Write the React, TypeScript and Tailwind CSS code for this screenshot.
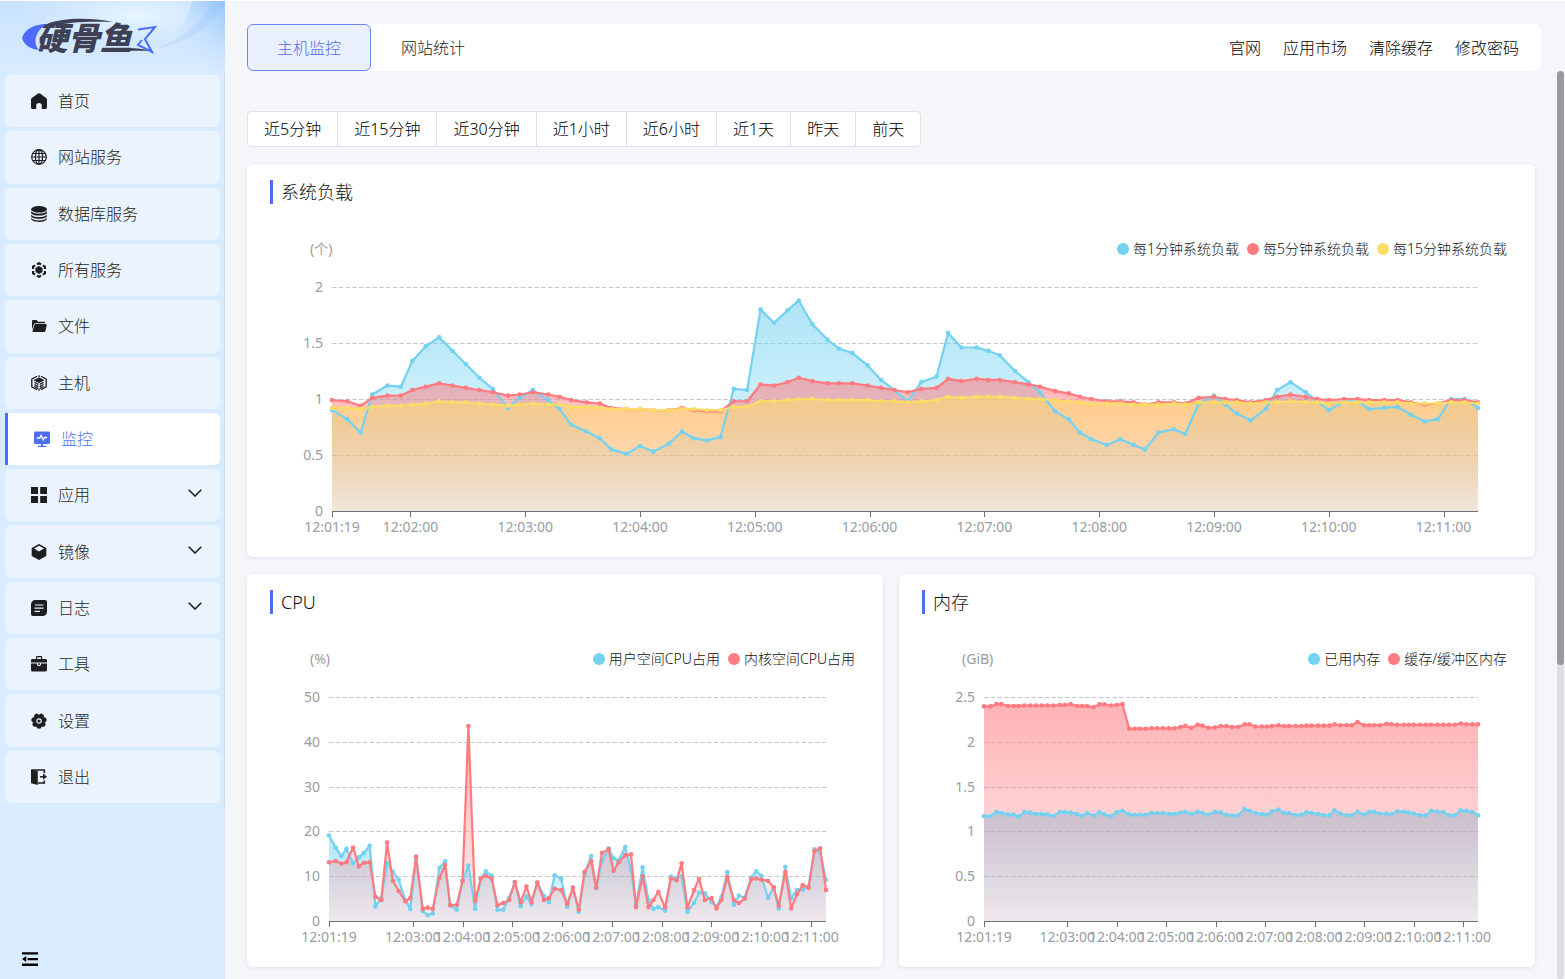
import { useLayoutEffect, useRef, useState, type ReactNode } from 'react';
import clsx from 'clsx';

const SKY = '#73d2f1';
const ROSE = '#ff7b80';
const GOLD = '#fedb65';

// sample times, seconds after 12:01:19
const TIMES = [
  0, 8, 15, 21, 29, 36, 42, 49, 56, 63, 70, 77, 84, 92, 98, 105, 113, 119, 125, 133, 140, 146, 154, 161, 168, 176, 183, 189, 196,
  203, 210, 217, 224, 231, 238, 244, 251, 259, 265, 272, 280, 287, 294, 301, 308, 316, 322, 329, 337, 343, 349, 357, 364, 370, 378, 385, 391, 397,
  405, 412, 419, 425, 432, 440, 446, 453, 461, 467, 473, 480, 488, 494, 501, 509, 515, 521, 529, 536, 542, 550, 557, 564, 571, 578, 585, 592, 599,
];

const LOAD_1 = [
  0.9, 0.82, 0.7, 1.04, 1.12, 1.11, 1.34, 1.47, 1.55, 1.43, 1.31, 1.19, 1.09, 0.92, 1.01, 1.08, 0.99, 0.91, 0.77, 0.71, 0.65, 0.55, 0.51, 0.58, 0.53, 0.6, 0.71, 0.65, 0.63,
  0.66, 1.09, 1.08, 1.8, 1.68, 1.79, 1.88, 1.67, 1.53, 1.45, 1.41, 1.3, 1.17, 1.08, 0.98, 1.15, 1.2, 1.59, 1.46, 1.46, 1.43, 1.39, 1.25, 1.15, 1.06, 0.89, 0.82, 0.7, 0.64,
  0.59, 0.64, 0.59, 0.55, 0.7, 0.73, 0.69, 0.96, 1.03, 0.95, 0.87, 0.81, 0.91, 1.08, 1.15, 1.06, 0.98, 0.9, 0.98, 0.98, 0.91, 0.92, 0.93, 0.86, 0.8, 0.82, 1, 1, 0.92,
];
const LOAD_5 = [
  0.99, 0.98, 0.94, 1.01, 1.03, 1.03, 1.08, 1.11, 1.14, 1.12, 1.1, 1.08, 1.06, 1.03, 1.04, 1.06, 1.04, 1.02, 0.99, 0.97, 0.96, 0.92, 0.91, 0.91, 0.9, 0.9, 0.92, 0.9, 0.89,
  0.89, 0.98, 0.98, 1.13, 1.12, 1.15, 1.19, 1.16, 1.14, 1.14, 1.14, 1.12, 1.1, 1.08, 1.06, 1.09, 1.1, 1.18, 1.16, 1.18, 1.17, 1.17, 1.15, 1.13, 1.11, 1.07, 1.05, 1.02, 1,
  0.98, 0.98, 0.97, 0.95, 0.97, 0.97, 0.96, 1.01, 1.02, 1, 0.99, 0.97, 0.99, 1.02, 1.04, 1.02, 1, 0.99, 1, 1, 0.99, 0.99, 0.99, 0.97, 0.95, 0.96, 0.99, 0.99, 0.97,
];
const LOAD_15 = [
  0.92, 0.92, 0.91, 0.93, 0.94, 0.94, 0.95, 0.96, 0.98, 0.97, 0.97, 0.96, 0.95, 0.94, 0.95, 0.96, 0.95, 0.95, 0.93, 0.93, 0.92, 0.91, 0.91, 0.91, 0.9, 0.9, 0.91, 0.91, 0.9,
  0.9, 0.93, 0.93, 0.98, 0.98, 0.99, 1, 1, 0.99, 0.99, 0.99, 0.99, 0.98, 0.98, 0.97, 0.98, 0.99, 1.02, 1.01, 1.02, 1.02, 1.02, 1.01, 1, 1, 0.99, 0.98, 0.97, 0.96,
  0.96, 0.96, 0.95, 0.95, 0.95, 0.96, 0.95, 0.97, 0.97, 0.97, 0.97, 0.96, 0.97, 0.97, 0.98, 0.97, 0.97, 0.96, 0.97, 0.97, 0.97, 0.97, 0.97, 0.96, 0.96, 0.96, 0.97, 0.97, 0.96,
];
const CPU_USER = [
  19.1, 16.4, 14.5, 16.1, 12.9, 14.2, 15.2, 16.8, 3.2, 5.1, 12.9, 11, 9.2, 4.7, 2.7, 14, 2.2, 1.3, 1.7, 11.9, 13.3, 3.5, 2.5, 8.9, 12.4, 2.7, 9.5, 11.1, 10.1,
  2.5, 2.5, 5.1, 8.6, 3.3, 5.5, 3.7, 8.6, 5.6, 4.2, 10.2, 9.4, 3.2, 7.5, 2, 10.5, 14.5, 7.3, 13.4, 16.2, 14, 13.5, 16.5, 11.2, 3.6, 12, 4.7, 2.7, 3.1,
  2.3, 9.9, 9.5, 10, 2, 4.1, 6.3, 6.2, 4.2, 3.2, 5.4, 10.9, 3.6, 5.7, 5.2, 9.7, 11.1, 10.1, 5.2, 7.5, 2.8, 12.1, 5.1, 6.9, 7, 7.8, 16, 15.3, 9.2,
];
const CPU_KERNEL = [
  13.1, 13.4, 12.8, 13.1, 16.4, 12.2, 13, 13.1, 5.4, 4.7, 17.5, 9, 6.7, 4.4, 5.1, 14.4, 2.7, 3, 2.7, 9.6, 12.5, 3.5, 3.6, 9, 43.5, 4.5, 9.5, 10.1, 9.5,
  3.5, 4, 4.7, 8.7, 4.2, 7.7, 4.2, 8.6, 4.7, 5.1, 7.2, 6.9, 3.8, 7.4, 2.5, 11, 13.4, 7.4, 15.2, 16, 11.2, 13.1, 14.7, 14.9, 3.1, 9.9, 3.1, 4.7, 6.5,
  3, 9.5, 9.1, 12.9, 3, 6.9, 9.4, 4.7, 5.1, 2.8, 4.7, 9.8, 4.7, 4, 5, 9.4, 9.5, 9.2, 9, 7.5, 3.4, 11, 2.8, 6, 8, 7.4, 15.6, 16.2, 6.9,
];
const MEM_USED = [
  1.17, 1.17, 1.215, 1.205, 1.19, 1.185, 1.165, 1.215, 1.21, 1.195, 1.195, 1.19, 1.175, 1.215, 1.215, 1.21, 1.195, 1.175, 1.205, 1.175, 1.215, 1.19, 1.17, 1.215, 1.23, 1.19, 1.185, 1.185, 1.185,
  1.205, 1.205, 1.205, 1.195, 1.195, 1.21, 1.22, 1.195, 1.22, 1.205, 1.185, 1.22, 1.21, 1.185, 1.178, 1.178, 1.25, 1.23, 1.205, 1.195, 1.185, 1.225, 1.245, 1.205, 1.205, 1.18, 1.185, 1.215, 1.205,
  1.195, 1.18, 1.18, 1.235, 1.2, 1.18, 1.18, 1.22, 1.185, 1.22, 1.22, 1.2, 1.2, 1.19, 1.225, 1.22, 1.21, 1.2, 1.18, 1.18, 1.23, 1.22, 1.215, 1.18, 1.18, 1.235, 1.23, 1.215, 1.18,
];
const MEM_CACHE = [
  2.395, 2.395, 2.42, 2.42, 2.4, 2.4, 2.4, 2.405, 2.405, 2.405, 2.405, 2.405, 2.405, 2.41, 2.41, 2.42, 2.4, 2.4, 2.4, 2.385, 2.418, 2.418, 2.405, 2.41, 2.42, 2.146, 2.146, 2.146, 2.146,
  2.15, 2.15, 2.15, 2.15, 2.15, 2.165, 2.178, 2.155, 2.19, 2.18, 2.157, 2.16, 2.175, 2.175, 2.165, 2.165, 2.195, 2.195, 2.17, 2.17, 2.17, 2.175, 2.185, 2.175, 2.175, 2.175, 2.175, 2.18, 2.18,
  2.18, 2.18, 2.18, 2.195, 2.185, 2.185, 2.185, 2.22, 2.185, 2.185, 2.185, 2.185, 2.2, 2.195, 2.19, 2.19, 2.19, 2.19, 2.19, 2.19, 2.19, 2.19, 2.19, 2.19, 2.19, 2.205, 2.195, 2.195, 2.195,
];

type Series = { name: string; color: string; data: number[] };

type ChartProps = {
  id: string;
  title: string;
  unit: string;
  yTicks: number[];
  left: number;
  firstMinute: number;
  series: Series[];
};

const TOP = 28;
const BASE = 252;
const SPAN = 599;

function ChartCard({ id, title, unit, yTicks, left, firstMinute, series }: ChartProps) {
  const box = useRef<HTMLDivElement>(null);
  const [width, setWidth] = useState(635);

  useLayoutEffect(() => {
    const el = box.current;
    if (!el) return;
    const update = () => setWidth(el.clientWidth);
    update();
    const ro = new ResizeObserver(update);
    ro.observe(el);
    return () => ro.disconnect();
  }, []);

  const right = width - 57;
  const max = Math.max(...yTicks);
  const x = (t: number) => left + (t / SPAN) * (right - left);
  const y = (v: number) => BASE - (v / max) * (BASE - TOP);

  const xTicks = [{ t: 0, label: '12:01:19' }];
  for (let m = firstMinute; m <= 11; m++) xTicks.push({ t: m * 60 - 79, label: `12:${String(m).padStart(2, '0')}:00` });

  return (
    <section className="min-w-0 rounded-md bg-white pt-4 shadow-[0_1px_4px_rgba(30,50,90,0.10)]">
      <h2 className="ml-[23px] flex h-6 items-center border-l-3 border-[#4e6ef2] pl-2 text-lg leading-6 text-[#111]">{title}</h2>
      <div className="mt-[35px] flex h-5 items-center justify-between pr-7 pl-[63px] text-sm leading-5">
        <span className="font-normal text-[#999ca2]">{unit}</span>
        <ul className="flex gap-2 text-[#111]">
          {series.map((s) => (
            <li key={s.name} className="flex items-center gap-1">
              <span className="h-3 w-3 rounded-full" style={{ background: s.color }} />
              {s.name}
            </li>
          ))}
        </ul>
      </div>
      <div ref={box} className="h-[298px] w-full overflow-hidden">
        <svg width={width} height={298} className="block font-normal" role="img" aria-label={title}>
          {yTicks.filter((v) => v > 0).map((v) => (
            <line key={v} x1={left} x2={right} y1={Math.round(y(v)) + 0.5} y2={Math.round(y(v)) + 0.5} stroke="#c4c7cf" strokeDasharray="4.5 2.25" />
          ))}
          {yTicks.map((v) => (
            <text key={v} x={left - 9} y={y(v) + 5} textAnchor="end" fontSize="14" fill="#999ca2">{v}</text>
          ))}
          {series.map((s, i) => {
            const pts = s.data.map((v, k) => `${x(TIMES[k]).toFixed(1)},${y(v).toFixed(1)}`).join(' ');
            return (
              <g key={s.name}>
                <defs>
                  <linearGradient id={`${id}-${i}`} x1="0" y1="0" x2="0" y2="1">
                    <stop offset="0" stopColor={s.color} stopOpacity="0.58" />
                    <stop offset="1" stopColor={s.color} stopOpacity="0.13" />
                  </linearGradient>
                </defs>
                <polygon points={`${left},${BASE} ${pts} ${right},${BASE}`} fill={`url(#${id}-${i})`} />
              </g>
            );
          })}
          <path d={`M${left} ${BASE + 0.5}H${right}`} stroke="#6e7079" />
          {xTicks.map(({ t, label }) => (
            <g key={label}>
              <path d={`M${Math.round(x(t)) + 0.5} ${BASE}v6`} stroke="#6e7079" />
              <text x={x(t)} y={BASE + 21} textAnchor="middle" fontSize="14" fill="#999ca2">{label}</text>
            </g>
          ))}
          {series.map((s) => (
            <g key={s.name} fill={s.color}>
              <polyline points={s.data.map((v, k) => `${x(TIMES[k])},${y(v)}`).join(' ')} fill="none" stroke={s.color} strokeWidth="2.2" strokeLinejoin="bevel" />
              {s.data.map((v, k) => <circle key={k} cx={x(TIMES[k])} cy={y(v)} r="2.3" />)}
            </g>
          ))}
        </svg>
      </div>
    </section>
  );
}

function Icon({ children }: { children: ReactNode }) {
  return <svg viewBox="0 0 16 16" className="h-4 w-4 shrink-0" fill="currentColor" aria-hidden="true">{children}</svg>;
}

const icons = {
  home: <path d="M7 .6a1.700 1.700 0 0 1 2 0l6.200 4.300c.5.4.8.9.8 1.500v8.100c0 .8-.7 1.500-1.500 1.500H10.800v-3.200a2.800 2.800 0 0 0-5.600 0V16H1.500C.7 16 0 15.300 0 14.500V6.400c0-.6.3-1.100.8-1.500z" />,
  globe: (
    <g fill="none" stroke="currentColor" strokeWidth="1.200">
      <circle cx="8" cy="8" r="7.300" />
      <ellipse cx="8" cy="8" rx="3.600" ry="7.300" />
      <path d="M8 .7v14.600M.7 8h14.600M1.800 4.500h12.400M1.800 11.500h12.400" />
    </g>
  ),
  db: (
    <>
      <ellipse cx="8" cy="3.300" rx="7.900" ry="3.300" />
      <path d="M.1 4.800C1.300 8.600 14.700 8.600 15.900 4.800v2.100c-1.300 3.500-14.500 3.500-15.800 0zM.1 8.300c1.200 3.800 14.600 3.800 15.800 0v2c-1.300 3.500-14.500 3.500-15.800 0zM.1 11.600c1.200 3.800 14.600 3.800 15.800 0v1c0 4.500-15.800 4.500-15.800 0z" />
    </>
  ),
  services: (
    <>
      <path d="m8 4 3.500 2v4L8 12l-3.500-2V6z" />
      <path
        d="m8 1.200 5.900 3.400v6.800L8 14.800l-5.900-3.400V4.600z"
        fill="none"
        stroke="currentColor"
        strokeWidth="2.200"
        strokeDasharray="4.700 2.110"
        strokeDashoffset="2.350"
      />
    </>
  ),
  folder: (
    <>
      <path d="M1 3.100C1 2.500 1.500 2 2.100 2h3.400l1.600 1.700h6c.6 0 1 .5 1 1.100v.5H4.200c-.6 0-1.100.3-1.300.9L1 11.500z" />
      <path d="M4.500 6H15c.5 0 .8.400.7.900l-1.300 6.300c-.1.500-.5.8-1 .8H2.500c-.7 0-1.100-.4-1-1l2-6.300c.1-.4.5-.7 1-.7z" />
    </>
  ),
  host: (
    <g fill="none" stroke="currentColor" strokeWidth="1.300">
      <path d="M6 1.200.8 4.200v7.600L6 14.800M10 1.200l5.200 3v7.600l-5.200 3M8 .2v2M8 14v1.800" />
      <path d="m8 3.200 4 2-4 2.100-4-2.100z" fill="currentColor" />
      <path d="m3.400 7.300 3.900 2.100M3.400 9.500l3.900 2.100M3.400 11.500l3.900 2.100M12.600 7.300 8.700 9.400M12.600 9.500l-3.900 2.100M12.600 11.500l-3.900 2.100" />
    </g>
  ),
  monitor: (
    <>
      <rect y=".4" width="16" height="12.600" rx="1.400" />
      <path d="M7 13h2v1.800h3v1.100H4v-1.100h3z" />
      <path d="M2.800 7h3L7 4.500l2.300 4.300L10.600 6.500h2.600" fill="none" stroke="#fff" strokeWidth="1.300" />
    </>
  ),
  grid: <path d="M0 0h7v7H0zM9.200 0H16v7H9.200zM0 9h7v7H0zM9.200 9H16v7H9.200z" />,
  cube: <path fillRule="evenodd" d="M8 0l7.300 4.100v7.800L8 16 .7 11.900V4.100zm0 1.700L3 4.500l5 3 5-3z" />,
  log: (
    <>
      <path d="M4.300 0H14a2 2 0 0 1 2 2v9.700A4.300 4.300 0 0 1 11.700 16H2a2 2 0 0 1-2-2V4.300A4.300 4.300 0 0 1 4.300 0z" />
      <path d="M4 5h8.500M3.500 8.200h9M3.500 11.300h5.500" stroke="#ebf3ff" strokeWidth="1.200" fill="none" />
    </>
  ),
  tools: (
    <>
      <path d="M5 3V1.200C5 .6 5.500.1 6 .1h4.200c.6 0 1 .5 1 1.100V3h3.400c.8 0 1.400.6 1.400 1.400v2.100H0V4.400C0 3.600.6 3 1.400 3zm1.200 0h3.800V1.300H6.200z" fillRule="evenodd" />
      <path d="M0 7.500h6v.8a2 2 0 0 0 4 0v-.8h6v6.600c0 .8-.6 1.400-1.400 1.400H1.400C.6 15.500 0 14.900 0 14.100zM7.200 7.200h1.600v1.200a.8.800 0 0 1-1.600 0z" />
    </>
  ),
  gear: (
    <>
      <circle cx="8" cy="8" r="6" />
      {[0, 51.4, 102.9, 154.3, 205.7, 257.1, 308.6].map((a) => (
        <circle key={a} cx="8" cy="13.300" r="2.500" transform={`rotate(${a} 8 8)`} />
      ))}
      <circle cx="8" cy="8" r="2.200" fill="none" stroke="#ebf3ff" strokeWidth="1.200" />
    </>
  ),
  exit: (
    <>
      <path d="M0 .5 6.800 2.200V16L0 14.300z" />
      <path d="M.5 1h12.800v3M7 14h6.300v-2.600M9 7.700h4" fill="none" stroke="currentColor" strokeWidth="1.600" />
      <path d="M12 4.600 16 7.700l-4 3.100z" />
    </>
  ),
};

const menu: { key: keyof typeof icons; label: string; active?: boolean; more?: boolean }[] = [
  { key: 'home', label: '首页' },
  { key: 'globe', label: '网站服务' },
  { key: 'db', label: '数据库服务' },
  { key: 'services', label: '所有服务' },
  { key: 'folder', label: '文件' },
  { key: 'host', label: '主机' },
  { key: 'monitor', label: '监控', active: true },
  { key: 'grid', label: '应用', more: true },
  { key: 'cube', label: '镜像', more: true },
  { key: 'log', label: '日志', more: true },
  { key: 'tools', label: '工具' },
  { key: 'gear', label: '设置' },
  { key: 'exit', label: '退出' },
];

function Logo() {
  return (
    <div className="relative h-[70px] overflow-hidden bg-linear-to-b from-[#c9e3fd] to-[#d8ebff]">
      <svg viewBox="0 0 225 70" preserveAspectRatio="none" className="absolute inset-0 h-full w-full" aria-hidden="true">
        <defs>
          <linearGradient id="ray" x1="1" y1="0" x2="0" y2="1">
            <stop offset="0" stopColor="#8fc2fb" stopOpacity="0.9" />
            <stop offset="0.6" stopColor="#c0defe" stopOpacity="0" />
          </linearGradient>
          <radialGradient id="glow" cx="0.6" cy="0.2" r="0.5">
            <stop offset="0" stopColor="#e8f5ff" />
            <stop offset="1" stopColor="#d8ebff" stopOpacity="0" />
          </radialGradient>
        </defs>
        <rect width="225" height="70" fill="url(#glow)" />
        <path d="M192 0h33v70h-75q-15-15 15-30 22-13 27-40z" fill="url(#ray)" />
        <path d="M225 3q-22 36-70 45 42-16 58-48h12z" fill="#8abdf8" opacity="0.2" />
      </svg>
      <span className="absolute top-[15px] left-[36px] text-[32px] leading-[44px] font-black text-[#3e4156] italic">硬骨鱼</span>
      <svg viewBox="0 0 140 40" className="absolute top-[15px] left-[20px] h-10 w-[140px]" aria-hidden="true">
        <path d="M27 8C14 8 5 13 2 22c2 7 8 11 17 12-7-8-3-20 8-26z" fill="#4d6cfe" />
        <path d="M27 8C45 1 72 2 93 6 70 5 48 6 33 10z" fill="#3e4156" />
        <path d="M80 35c20-4 36-4 52 0-18-1-34 1-52 0z" fill="#3e4156" />
        <path d="M118 13.500 135 11 125 23l7 13-14-7 4-5" fill="none" stroke="#4d6cfe" strokeWidth="2" />
      </svg>
    </div>
  );
}

function Sidebar() {
  return (
    <aside className="flex w-[225px] shrink-0 flex-col bg-[#d8ebff]">
      <Logo />
      <nav className="border-r border-[#c9def6] pt-1 pr-1 pb-1 pl-[5px]">
        <ul className="grid h-[728px] auto-rows-fr gap-1">
          {menu.map((m) => (
            <li key={m.key} className="flex min-h-0">
              <a
                href="#"
                className={clsx(
                  'flex flex-1 items-center gap-[11px] pl-[26px] text-base',
                  m.active ? 'rounded-r-md border-l-3 border-[#4e6ef2] bg-white text-[#4e6ef2]' : 'rounded-md bg-[#ebf3ff] text-[#1d1e20]',
                )}
              >
                <Icon>{icons[m.key]}</Icon>
                {m.label}
                {m.more && (
                  <svg viewBox="0 0 14 8" className="mr-[18px] mb-1 ml-auto h-2 w-3.5" fill="none" stroke="#1f2329" strokeWidth="1.600" aria-hidden="true">
                    <path d="m.7.7 6.300 6.300L13.300.7" />
                  </svg>
                )}
              </a>
            </li>
          ))}
        </ul>
      </nav>
      <button type="button" aria-label="收起菜单" className="mt-auto mb-3 ml-[22px] h-4 w-4 text-black">
        <Icon>
          <path d="M0 1.200h16v2.300H0zM5.500 7h10.500v2.200H5.500zM0 12.600h16v2.300H0zM0 8.100l4.200-3v6z" />
        </Icon>
      </button>
    </aside>
  );
}

const ranges = ['近5分钟', '近15分钟', '近30分钟', '近1小时', '近6小时', '近1天', '昨天', '前天'];
const links = ['官网', '应用市场', '清除缓存', '修改密码'];

export default function App() {
  return (
    <div className="relative flex h-screen min-h-[979px] overflow-hidden border-t border-white bg-[#f4f6fa] font-['Noto_Sans','Noto_Sans_CJK_SC',sans-serif] font-light">
      <Sidebar />
      <main className="min-w-0 flex-1 pt-[23px] pl-[22px]">
        <header className="mr-6 flex h-[47px] items-center justify-between rounded-md bg-white">
          <div className="flex h-full" role="tablist">
            <button type="button" role="tab" aria-selected="true" className="rounded-md border border-[#6b86f8] bg-[#ebf0ff] px-[29px] text-base text-[#4e6ef2]">主机监控</button>
            <button type="button" role="tab" aria-selected="false" className="px-[30px] text-base text-[#222]">网站统计</button>
          </div>
          <div className="flex gap-[22px] pr-[22px] text-base text-black">
            {links.map((l) => <a key={l} href="#">{l}</a>)}
          </div>
        </header>

        <div className="mr-[30px] pt-10">
          <div className="flex h-9 text-base text-black">
            {ranges.map((r) => (
              <button key={r} type="button" className="-ml-px border border-[#dfe1e6] bg-white px-4 first:ml-0 first:rounded-l-sm last:rounded-r-sm">{r}</button>
            ))}
          </div>

          <div className="mt-[17px] grid grid-cols-2 gap-x-4 gap-y-[17px]">
            <div className="col-span-2 grid">
              <ChartCard
                id="load"
                title="系统负载"
                unit="(个)"
                yTicks={[0, 0.5, 1, 1.5, 2]}
                left={85}
                firstMinute={2}
                series={[
                  { name: '每1分钟系统负载', color: SKY, data: LOAD_1 },
                  { name: '每5分钟系统负载', color: ROSE, data: LOAD_5 },
                  { name: '每15分钟系统负载', color: GOLD, data: LOAD_15 },
                ]}
              />
            </div>
            <ChartCard
              id="cpu"
              title="CPU"
              unit="(%)"
              yTicks={[0, 10, 20, 30, 40, 50]}
              left={82}
              firstMinute={3}
              series={[
                { name: '用户空间CPU占用', color: SKY, data: CPU_USER },
                { name: '内核空间CPU占用', color: ROSE, data: CPU_KERNEL },
              ]}
            />
            <ChartCard
              id="mem"
              title="内存"
              unit="(GiB)"
              yTicks={[0, 0.5, 1, 1.5, 2, 2.5]}
              left={85}
              firstMinute={3}
              series={[
                { name: '已用内存', color: SKY, data: MEM_USED },
                { name: '缓存/缓冲区内存', color: ROSE, data: MEM_CACHE },
              ]}
            />
          </div>
        </div>
      </main>
      {/* scroll track of the content area */}
      <div className="absolute top-[70px] right-px bottom-0 w-[7px] rounded-full bg-[#dddee3]">
        <div className="h-[594px] rounded-full bg-[#999a9c]" />
      </div>
    </div>
  );
}
